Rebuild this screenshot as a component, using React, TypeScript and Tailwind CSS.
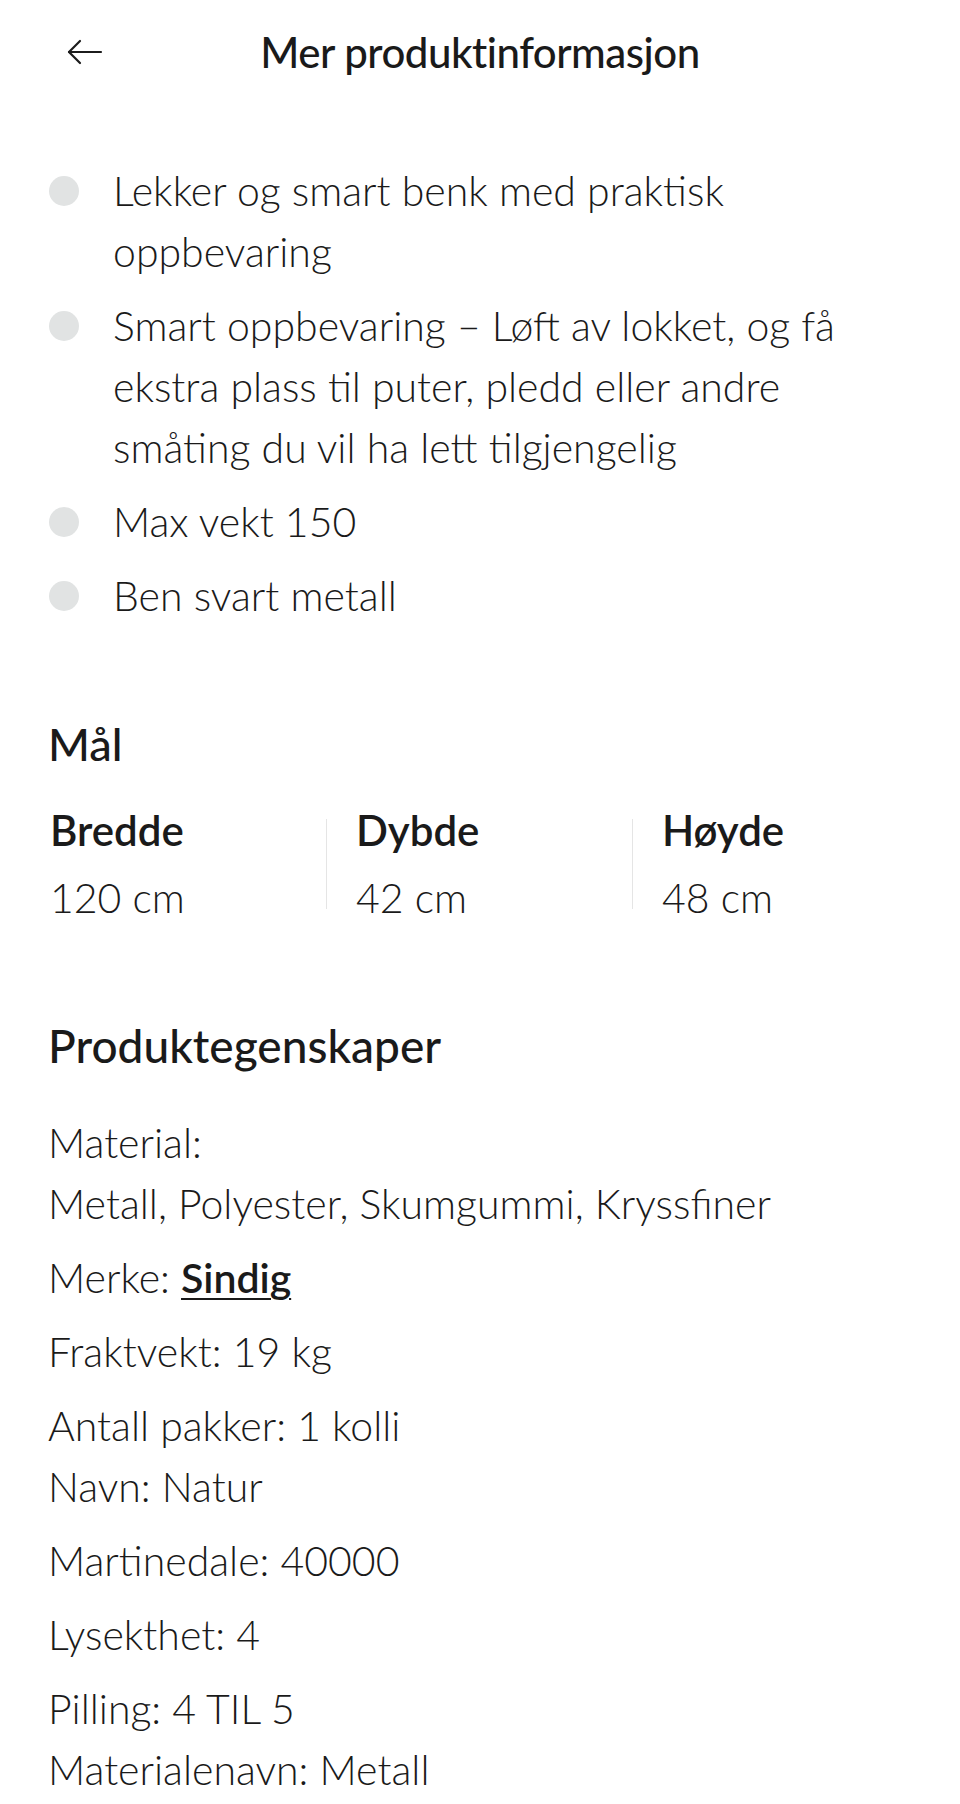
import { ReactNode } from "react";

const bullets = [
  "Lekker og smart benk med praktisk oppbevaring",
  "Smart oppbevaring – Løft av lokket, og få ekstra plass til puter, pledd eller andre småting du vil ha lett tilgjengelig",
  "Max vekt 150",
  "Ben svart metall",
];

const dims = [
  { label: "Bredde", value: "120 cm" },
  { label: "Dybde", value: "42 cm" },
  { label: "Høyde", value: "48 cm" },
];

const props: ReactNode[][] = [
  ["Material:", "Metall, Polyester, Skumgummi, Kryssfiner"],
  [
    <>
      Merke:{" "}
      <a href="#" className="font-semibold underline underline-offset-[5px] decoration-2">
        Sindig
      </a>
    </>,
  ],
  ["Fraktvekt: 19 kg"],
  ["Antall pakker: 1 kolli", "Navn: Natur"],
  ["Martinedale: 40000"],
  ["Lysekthet: 4"],
  ["Pilling: 4 TIL 5", "Materialenavn: Metall"],
];

function BackArrow() {
  return (
    <svg width="36" height="26" viewBox="0 0 36 26" fill="none" stroke="#1c1c1c" strokeWidth="2.2" strokeLinecap="round" strokeLinejoin="round">
      <path d="M2 13H34" />
      <path d="M13 2L2 13L13 24" />
    </svg>
  );
}

export default function App() {
  return (
    <div className="w-[960px] min-h-[1804px] bg-white text-[#1a1a1a] font-['Lato',sans-serif]">
      <header className="grid h-[104px] grid-cols-[1fr_auto_1fr] items-center">
        <button className="justify-self-start pl-[67px]">
          <BackArrow />
        </button>
        <h1 className="text-[42px] font-medium tracking-[-0.5px]">Mer produktinformasjon</h1>
        <div />
      </header>

      <main className="pl-[48px] pr-[40px] pb-[20px]">
        <ul className="mt-[56px] flex flex-col gap-[13px]">
          {bullets.map((b) => (
            <li key={b} className="flex items-start">
              <span className="ml-[1px] mt-[16px] h-[30px] w-[30px] shrink-0 rounded-full bg-[#e1e3e3]" />
              <p className="pl-[34px] pr-[40px] text-[41px] font-light leading-[61px]">{b}</p>
            </li>
          ))}
        </ul>

        <h2 className="mt-[88px] text-[45px] font-medium leading-[60px]">Mål</h2>
        <div className="-ml-[28px] mt-[26px] flex">
          {dims.map((d, i) => (
            <div key={d.label} className="flex w-[306px] shrink-0 items-center">
              {i > 0 && <span className="h-[90px] w-px bg-[#e5e5e5]" />}
              <div className={i > 0 ? "pl-[29px]" : "pl-[30px]"}>
                <div className="text-[42px] font-semibold leading-[61px]">{d.label}</div>
                <div className="mt-[6px] text-[41px] font-light leading-[61px]">{d.value}</div>
              </div>
            </div>
          ))}
        </div>

        <h2 className="mt-[88px] text-[46px] font-medium leading-[60px]">Produktegenskaper</h2>
        <div className="mt-[36px] flex flex-col gap-[13px]">
          {props.map((lines, i) => (
            <div key={i} className="text-[41px] font-light leading-[61px]">
              {lines.map((l, j) => (
                <div key={j}>{l}</div>
              ))}
            </div>
          ))}
        </div>
      </main>
    </div>
  );
}
